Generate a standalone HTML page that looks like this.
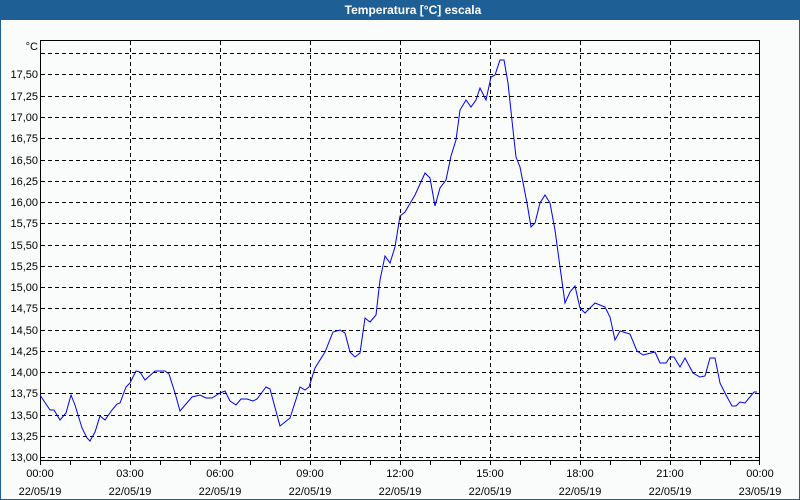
<!DOCTYPE html>
<html><head><meta charset="utf-8"><style>
html,body{margin:0;padding:0;width:800px;height:500px;overflow:hidden;background:#f9fcfa}
svg{display:block;font-family:"Liberation Sans","DejaVu Sans",sans-serif}
</style></head><body>
<svg width="800" height="500" viewBox="0 0 800 500">
<rect x="0" y="0" width="800" height="500" fill="#f9fcfa"/>
<rect x="0" y="0" width="800" height="20" fill="#1e5f96"/>
<rect x="0" y="0" width="1" height="500" fill="#1e5f96"/>
<rect x="799" y="0" width="1" height="500" fill="#1e5f96"/>
<rect x="0" y="499" width="800" height="1" fill="#1e5f96"/>
<text x="413" y="14" fill="#fff" font-size="12" font-weight="bold" text-anchor="middle">Temperatura [°C] escala</text>
<g stroke="#000" stroke-width="1" stroke-dasharray="4,3" fill="none" shape-rendering="crispEdges">
<path d="M41 53.5H760M41 74.5H760M41 96.5H760M41 117.5H760M41 138.5H760M41 160.5H760M41 181.5H760M41 202.5H760M41 223.5H760M41 245.5H760M41 266.5H760M41 287.5H760M41 308.5H760M41 330.5H760M41 351.5H760M41 372.5H760M41 393.5H760M41 415.5H760M41 436.5H760M41 457.5H760"/>
<path d="M130.5 41V461M220.5 41V461M310.5 41V461M400.5 41V461M490.5 41V461M580.5 41V461M670.5 41V461"/>
</g>
<g stroke="#000" fill="none" shape-rendering="crispEdges">
<rect x="40.5" y="40.5" width="719" height="420"/>
<path d="M40.5 461V465M70.5 461V465M100.5 461V465M130.5 461V465M160.5 461V465M190.5 461V465M220.5 461V465M250.5 461V465M280.5 461V465M310.5 461V465M340.5 461V465M370.5 461V465M400.5 461V465M430.5 461V465M460.5 461V465M490.5 461V465M520.5 461V465M550.5 461V465M580.5 461V465M610.5 461V465M640.5 461V465M670.5 461V465M700.5 461V465M730.5 461V465M759.5 461V465"/>
</g>
<polyline fill="none" stroke="#0000ee" stroke-width="1" points="40,395 50,410 54,410 60,420 66,413 71,395 75,405 82,428 87,438 90,441 95,432 100,416 105,420 112,410 117,404 120,403 126,387 130,383 136,371 140,372 145,380 155,371 165,371 169,374 175,393 180,411 192,397 200,395 206,398 212,398 220,393 225,391 230,401 236,405 241,399 247,399 253,401 257,399 266,387 270,389 280,426 290,418 300,387 305,390 309,387 315,368 325,352 333,332 340,330 345,333 350,352 355,357 360,353 365,318 370,322 376,315 380,280 385,256 390,263 395,247 400,216 405,212 415,195 425,173 430,178 435,206 440,188 446,180 451,156 456,140 460,110 466,100 471,107 476,100 480,88 486,100 491,77 495,75 500,60 504,60 508,83 513,130 516,157 520,167 527,203 531,227 535,223 540,203 545,195 550,203 555,230 560,267 565,303 570,292 575,286 580,308 585,313 595,303 605,307 610,317 615,340 620,331 630,334 637,351 643,355 655,352 660,363 666,363 670,357 674,357 680,367 685,358 693,373 700,377 705,376 710,358 715,358 720,383 726,395 732,406 736,406 740,402 745,403 754,392 757,392"/>
<g font-size="11" fill="#000" text-anchor="end">
<text x="38" y="50">°C</text>
<text x="38" y="78">17,50</text><text x="38" y="100">17,25</text><text x="38" y="121">17,00</text><text x="38" y="142">16,75</text><text x="38" y="164">16,50</text><text x="38" y="185">16,25</text><text x="38" y="206">16,00</text><text x="38" y="227">15,75</text><text x="38" y="249">15,50</text><text x="38" y="270">15,25</text><text x="38" y="291">15,00</text><text x="38" y="312">14,75</text><text x="38" y="334">14,50</text><text x="38" y="355">14,25</text><text x="38" y="376">14,00</text><text x="38" y="397">13,75</text><text x="38" y="419">13,50</text><text x="38" y="440">13,25</text><text x="38" y="461">13,00</text>
</g>
<g font-size="11" fill="#000" text-anchor="middle">
<text x="40" y="477">00:00</text><text x="40" y="495">22/05/19</text>
<text x="130" y="477">03:00</text><text x="130" y="495">22/05/19</text>
<text x="220" y="477">06:00</text><text x="220" y="495">22/05/19</text>
<text x="310" y="477">09:00</text><text x="310" y="495">22/05/19</text>
<text x="400" y="477">12:00</text><text x="400" y="495">22/05/19</text>
<text x="490" y="477">15:00</text><text x="490" y="495">22/05/19</text>
<text x="580" y="477">18:00</text><text x="580" y="495">22/05/19</text>
<text x="670" y="477">21:00</text><text x="670" y="495">22/05/19</text>
<text x="760" y="477">00:00</text><text x="760" y="495">23/05/19</text>
</g>
</svg>
</body></html>
